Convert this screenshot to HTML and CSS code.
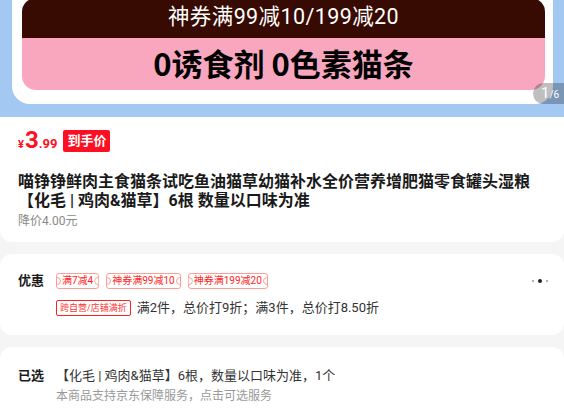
FILE: index.html
```html
<!DOCTYPE html>
<html lang="zh-CN">
<head>
  <meta charset="UTF-8">
  <meta name="viewport" content="width=device-width, initial-scale=1.0">
  <title>商品详情</title>
  <link rel="stylesheet" href="styles.css">
</head>
<body>
  <div class="gallery">
    <div class="poster">
      <div class="poster-inner">
        <div class="poster-top">神券满99减10/199减20</div>
        <div class="poster-main">0诱食剂 0色素猫条</div>
      </div>
    </div>
    <span class="pager"><b>1</b>/6</span>
  </div>

  <div class="info">
    <div class="price-row">
      <span class="price"><i>¥</i>3<small>.99</small></span>
      <span class="price-tag">到手价</span>
    </div>
    <h1 class="title">喵铮铮鲜肉主食猫条试吃鱼油猫草幼猫补水全价营养增肥猫零食罐头湿粮【化毛 | 鸡肉&amp;猫草】6根 数量以口味为准</h1>
    <p class="prev">降价4.00元</p>
  </div>

  <div class="card">
    <div class="row">
      <span class="label">优惠</span>
      <span class="coupon">满7减4</span>
      <span class="coupon">神券满99减10</span>
      <span class="coupon">神券满199减20</span>
      <span class="more"><i></i><i class="big"></i><i></i></span>
    </div>
    <div class="row row-gap">
      <span class="label"></span>
      <span class="promo-tag">跨自营/店铺满折</span>
      <span class="promo-text">满2件，总价打9折；满3件，总价打8.50折</span>
    </div>
  </div>

  <div class="card">
    <div class="row">
      <span class="label label-tall">已选</span>
      <div class="chosen">
        <p class="chosen-main">【化毛 | 鸡肉&amp;猫草】6根，数量以口味为准，1个</p>
        <p class="chosen-sub">本商品支持京东保障服务，点击可选服务</p>
      </div>
    </div>
  </div>
</body>
</html>
```

FILE: styles.css
```css
/* General */
body {
  margin: 0;
  background-color: #f5f5f5;
  font-family: Roboto, "Noto Sans CJK SC", sans-serif;
  color: #1a1a1a;
}

p, h1 {
  margin: 0;
}

/* Gallery */
.gallery {
  position: relative;
  height: 117px;
  overflow: hidden;
  background-color: #a3c9f3;
}

.poster {
  margin: -2px 11px 0 12px;
  padding: 2px 8px 14px 10px;
  background-color: #fff;
  border-radius: 0 0 18px 18px;
}

.poster-inner {
  border-radius: 14px;
  overflow: hidden;
  text-align: center;
  margin-top: -2px;
}

.poster-top {
  height: 40px;
  line-height: 38px;
  background-color: #370a02;
  color: #fff;
  font-size: 21.5px;
  letter-spacing: 0.4px;
}

.poster-main {
  height: 52px;
  line-height: 50px;
  background-color: #f8a7bf;
  color: #000;
  font-family: "Noto Sans CJK SC", sans-serif;
  font-size: 31px;
  font-weight: bold;
}

.pager {
  position: absolute;
  top: 83px;
  right: -12px;
  width: 43px;
  height: 21px;
  padding-left: 8px;
  line-height: 21px;
  border-radius: 11px;
  background-color: rgba(0, 0, 0, 0.25);
  color: #fff;
  font-size: 10px;
  box-sizing: border-box;
}

.pager b {
  font-size: 15px;
  font-weight: normal;
}

/* Price + title */
.info {
  background-color: #fff;
  border-radius: 0 0 12px 12px;
  padding: 13px 18px 13px;
}

.price-row {
  display: flex;
  align-items: center;
  height: 22px;
  margin-bottom: 20px;
}

.price {
  color: #ff0f23;
  font-size: 24px;
  font-weight: bold;
  line-height: 22px;
  margin-top: 3px;
}

.price i {
  font-style: normal;
  font-size: 11px;
  margin-right: 1px;
}

.price small {
  font-size: 13px;
}

.price-tag {
  margin-left: 6px;
  height: 22px;
  line-height: 22px;
  padding: 0 4px;
  background-color: #ff0f23;
  border-radius: 2px;
  color: #fff;
  font-size: 13px;
  font-weight: bold;
}

.title {
  font-size: 16px;
  line-height: 19px;
  font-weight: bold;
  color: #1a1a1a;
}

.prev {
  margin-top: 3px;
  font-size: 12px;
  line-height: 16px;
  color: #888;
}

/* Cards */
.card {
  margin-top: 12px;
  padding: 19px 16px 19px 18px;
  background-color: #fff;
  border-radius: 12px;
}

.row {
  display: flex;
  align-items: center;
  min-height: 16px;
}

.row-gap {
  margin-top: 11px;
}

.label {
  width: 38px;
  flex-shrink: 0;
  font-size: 13px;
  line-height: 16px;
  font-weight: bold;
  color: #1a1a1a;
}

.coupon {
  position: relative;
  height: 14px;
  line-height: 14px;
  padding: 0 5px;
  margin-right: 7px;
  border: 1px solid #ff9d96;
  border-radius: 3px;
  font-size: 10px;
  color: #ff1f1f;
}

.coupon::before,
.coupon::after {
  content: '';
  position: absolute;
  top: 50%;
  width: 6px;
  height: 6px;
  margin-top: -4px;
  border: 1px solid #ff9d96;
  border-radius: 50%;
  background-color: #fff;
}

.coupon::before {
  left: -4px;
  clip-path: inset(0 0 0 50%);
}

.coupon::after {
  right: -4px;
  clip-path: inset(0 50% 0 0);
}

.more {
  margin-left: auto;
  display: flex;
  align-items: center;
  gap: 4px;
}

.more i {
  width: 2px;
  height: 2px;
  border-radius: 50%;
  background-color: #999;
}

.more i.big {
  width: 4px;
  height: 4px;
  background-color: #222;
}

.promo-tag {
  height: 14px;
  line-height: 14px;
  padding: 0 3px;
  border: 1px solid #f22;
  border-radius: 2px;
  font-size: 9px;
  color: #f33;
}

.promo-text {
  margin-left: 6px;
  font-size: 13px;
  line-height: 16px;
  color: #333;
}

.row .label-tall {
  align-self: flex-start;
  line-height: 20px;
}

.chosen-main {
  font-size: 13px;
  line-height: 20px;
  color: #333;
}

.chosen-sub {
  margin-top: 2px;
  font-size: 12px;
  line-height: 16px;
  color: #999;
}
```
